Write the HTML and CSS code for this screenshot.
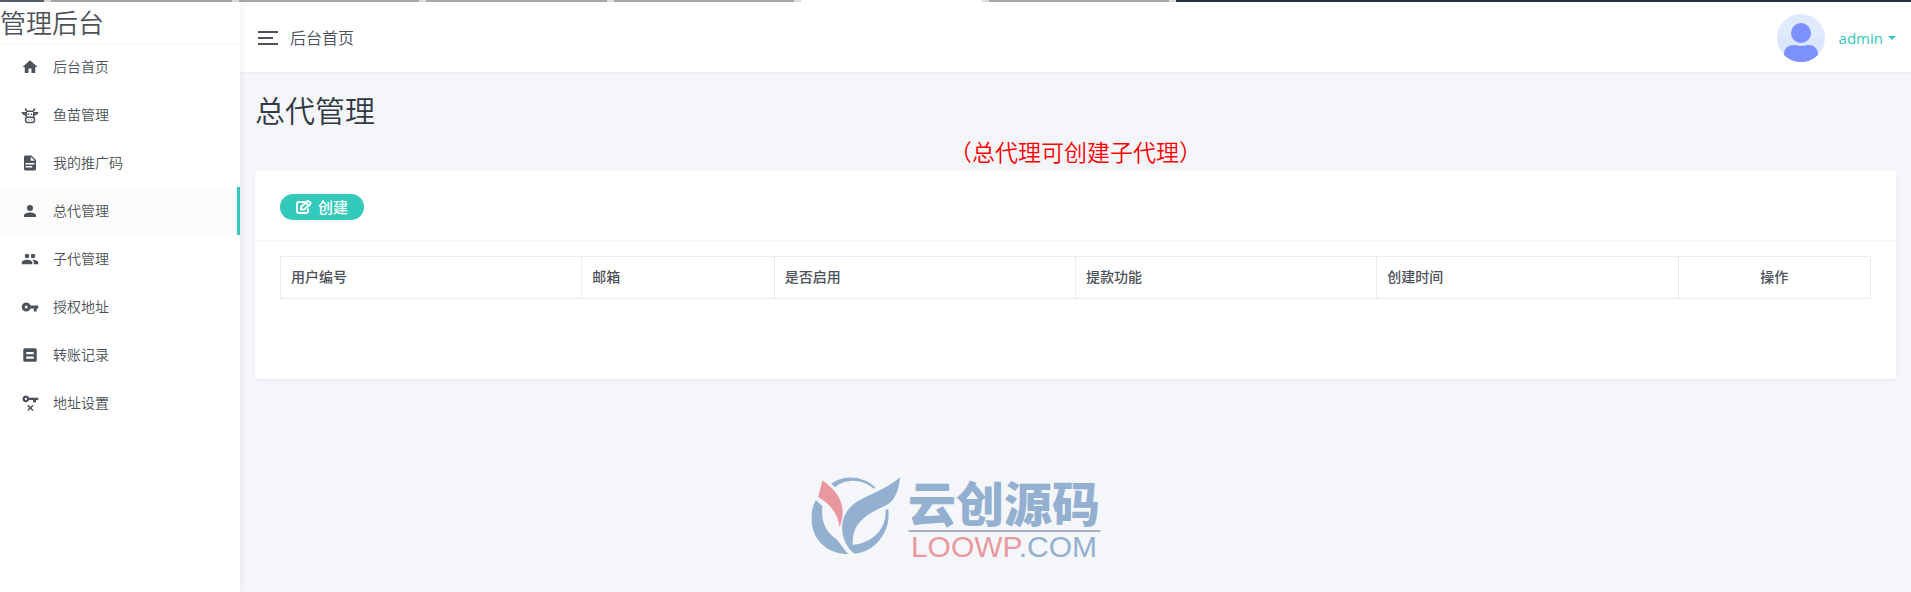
FILE: index.html
```html
<!DOCTYPE html>
<html lang="zh-CN">
<head>
  <meta charset="UTF-8" />
  <meta name="viewport" content="width=device-width, initial-scale=1.0"/>
  <title>总代管理</title>
  <link rel="stylesheet" href="styles.css">
</head>
<body>

<div class="top-strip">
  <span class="strip-start"></span>
  <span class="strip-tab"></span>
  <span class="strip-tab"></span>
  <span class="strip-tab"></span>
  <span class="strip-tab"></span>
  <span class="strip-tab current"></span>
  <span class="strip-tab"></span>
  <span class="strip-end"></span>
</div>

<div class="layout">
  <aside class="sidebar">
    <div class="brand">管理后台</div>
    <nav class="menu">
      <a href="#" class="menu-item">
        <svg class="icon" viewBox="0 0 24 24"><path d="M10,20V14H14V20H19V12H22L12,3L2,12H5V20H10Z"/></svg>
        后台首页
      </a>
      <a href="#" class="menu-item">
        <svg class="icon line" viewBox="0 0 24 24"><path d="M6 3C6 6 7 7 9 7H15C17 7 18 6 18 3M7 9H2C3 11 5 12 7 11M17 9H22C21 11 19 12 17 11M7 8V15M17 8V15"/><rect x="6" y="15" width="12" height="7" rx="3"/><path d="M10 10V12M14 10V12M10 18V19M14 18V19"/></svg>
        鱼苗管理
      </a>
      <a href="#" class="menu-item">
        <svg class="icon" viewBox="0 0 24 24"><path d="M13,9H18.500L13,3.500V9M6,2H14L20,8V20A2,2 0 0,1 18,22H6C4.890,22 4,21.100 4,20V4C4,2.890 4.890,2 6,2M15,18V16H6V18H15M18,14V12H6V14H18Z"/></svg>
        我的推广码
      </a>
      <a href="#" class="menu-item active">
        <svg class="icon" viewBox="0 0 24 24"><path d="M12,4A4,4 0 0,1 16,8A4,4 0 0,1 12,12A4,4 0 0,1 8,8A4,4 0 0,1 12,4M12,14C16.420,14 20,15.790 20,18V20H4V18C4,15.790 7.580,14 12,14Z"/></svg>
        总代管理
      </a>
      <a href="#" class="menu-item">
        <svg class="icon" viewBox="0 0 24 24"><path d="M16,13C15.710,13 15.380,13 15.030,13.050C16.190,13.890 17,15 17,16.500V19H23V16.500C23,14.170 18.330,13 16,13M8,13C5.670,13 1,14.170 1,16.500V19H15V16.500C15,14.170 10.330,13 8,13M8,11A3,3 0 0,0 11,8A3,3 0 0,0 8,5A3,3 0 0,0 5,8A3,3 0 0,0 8,11M16,11A3,3 0 0,0 19,8A3,3 0 0,0 16,5A3,3 0 0,0 13,8A3,3 0 0,0 16,11Z"/></svg>
        子代管理
      </a>
      <a href="#" class="menu-item">
        <svg class="icon" viewBox="0 0 24 24"><path d="M7,14A2,2 0 0,1 5,12A2,2 0 0,1 7,10A2,2 0 0,1 9,12A2,2 0 0,1 7,14M12.650,10C11.830,7.670 9.610,6 7,6A6,6 0 0,0 1,12A6,6 0 0,0 7,18C9.610,18 11.830,16.330 12.650,14H17V18H21V14H23V10H12.650Z"/></svg>
        授权地址
      </a>
      <a href="#" class="menu-item">
        <svg class="icon" viewBox="0 0 24 24"><path fill-rule="evenodd" d="M5,3H19A2,2 0 0,1 21,5V19A2,2 0 0,1 19,21H5A2,2 0 0,1 3,19V5A2,2 0 0,1 5,3M7,8V11H17V8H7M7,14V17H17V14H7Z"/></svg>
        转账记录
      </a>
      <a href="#" class="menu-item">
        <svg class="icon" viewBox="0 0 24 24"><path d="M6.500,2C8.460,2 10.130,3.250 10.740,5H23V8H20V11H16V8H10.740C10.130,9.750 8.460,11 6.500,11C4,11 2,9 2,6.500C2,4 4,2 6.500,2M6.500,5A1.500,1.500 0 0,0 5,6.500A1.500,1.500 0 0,0 6.500,8A1.500,1.500 0 0,0 8,6.500A1.500,1.500 0 0,0 6.500,5Z"/><path class="cross" d="M9 15L16 22M16 15L9 22"/></svg>
        地址设置
      </a>
    </nav>
  </aside>

  <div class="page">
    <header class="header">
      <button class="toggle" aria-label="菜单"><span></span><span class="short"></span><span></span></button>
      <span class="header-title">后台首页</span>
      <button class="user">
        <svg class="avatar" viewBox="0 0 48 48">
          <circle cx="24" cy="24" r="24" fill="#e0eaff"/>
          <path d="M0 24C15 22 33 30 47 20A24 24 0 0 1 1 30Z" fill="#dbe6fc"/>
          <circle cx="24" cy="19" r="10" fill="#7c90ff"/>
          <path d="M7 41C7 34 11 31 17 31C20 31 21 32 24 32C27 32 28 31 31 31C37 31 41 34 41 41A24 24 0 0 1 7 41Z" fill="#7c90ff"/>
        </svg>
        admin
        <span class="caret"></span>
      </button>
    </header>

    <main class="content">
      <h1>总代管理</h1>
      <p class="notice">（总代理可创建子代理）</p>
      <section class="card">
        <div class="card-header">
          <button class="btn-create">
            <svg class="edit" viewBox="0 0 16 14"><path d="M9 2H3Q1 2 1 4V11Q1 13 3 13H10Q12 13 12 11V8.500M5 9.500V7L11 1.500Q12 0.600 13 1.500L14.300 2.800Q15 3.500 14 4.500L8 9.500ZM10 3L13 6"/></svg>
            创建
          </button>
        </div>
        <div class="card-body">
          <table>
            <thead>
              <tr>
                <th class="wide">用户编号</th>
                <th>邮箱</th>
                <th class="wide">是否启用</th>
                <th class="wide">提款功能</th>
                <th class="wide">创建时间</th>
                <th class="center">操作</th>
              </tr>
            </thead>
          </table>
        </div>
      </section>
    </main>
  </div>
</div>

<div class="watermark">
  <svg class="mark" viewBox="0 0 267 232">
    <g fill="#94b0d0">
      <path d="M59 19C98 -9 155 -4 191 30L187 34C151 5 105 2 70 30Z"/>
      <path d="M13 68L33 87C27 129 42 165 77 187Q92 208 110 230C60 231 19 202 5 158Q-9 108 13 68Z"/>
      <path d="M266 0C262 35 253 65 231 80C181 105 119 127 124 203C171 198 226 165 222 98L230 95C240 151 200 224 129 229C87 198 80 132 112 95C141 58 209 48 266 0Z"/>
    </g>
    <path d="M33 9C73 39 112 79 84 150C81 114 57 79 20 59Z" fill="#e998a0"/>
  </svg>
  <div class="wordmark">
    <div class="wordmark-name">云创源码</div>
    <div class="wordmark-site"><span>LOOWP</span>.COM</div>
  </div>
</div>

</body>
</html>
```
FILE: styles.css
```css
* { box-sizing: border-box; }

body {
  font-family: "Open Sans", "Noto Sans CJK SC", sans-serif;
  font-size: 14px;
  font-weight: 350;
  line-height: 24px;
  margin: 0;
  min-height: 100vh;
  color: #4d5259;
  background-color: #f5f6fa;
  display: flex;
  flex-direction: column;
  position: relative;
}

button {
  font: inherit;
  padding: 0;
  border: none;
  background: none;
  cursor: pointer;
}

.top-strip {
  display: flex;
  gap: 7px;
  height: 2px;
  background: #dcdee0;
}

.strip-start {
  flex: 44;
  background: #59616b;
}

.strip-tab {
  flex: 180;
  background: #a5a8ac;
}

.strip-tab.current {
  background: #fff;
}

.strip-end {
  flex: 733;
  background: #26313f;
}

.layout {
  display: flex;
  flex: 1;
}

.sidebar {
  width: 240px;
  flex-shrink: 0;
  background: #fff;
  box-shadow: 0 0 8px rgba(0, 0, 0, 0.08);
  z-index: 1;
}

.brand {
  height: 42px;
  font-size: 26px;
  line-height: 43px;
  border-bottom: 1px solid #f7f7f7;
}

.menu {
  margin-top: -1px;
}

.menu-item {
  display: flex;
  align-items: center;
  gap: 14px;
  height: 48px;
  padding-left: 21px;
  color: #4d5259;
  text-decoration: none;
}

.menu-item.active {
  background: #fcfcfc;
  border-right: 3px solid #33cabb;
}

.icon {
  width: 18px;
  height: 18px;
  fill: #4d5259;
}

.icon.line {
  fill: none;
  stroke: #4d5259;
  stroke-width: 2;
}

.cross {
  stroke: #4d5259;
  stroke-width: 2;
}

.page {
  flex: 1;
}

.header {
  display: flex;
  align-items: center;
  height: 70px;
  padding: 2px 15px 0 18px;
  background: #fff;
  box-shadow: 0 1px 2px rgba(0, 0, 0, 0.04);
}

.toggle {
  display: flex;
  flex-direction: column;
  gap: 4px;
  width: 20px;
}

.toggle span {
  height: 2px;
  background: #4d5259;
}

.toggle .short {
  width: 15px;
}

.header-title {
  margin-left: 12px;
  font-size: 16px;
}

.user {
  display: flex;
  align-items: center;
  margin-left: auto;
  font-size: 15px;
  font-weight: 400;
  color: #33cabb;
}

.avatar {
  width: 48px;
  height: 48px;
  margin-right: 14px;
}

.caret {
  margin-left: 5px;
  border: 4px solid transparent;
  border-top-color: #33cabb;
  border-bottom: none;
}

.content {
  padding: 15px;
}

h1 {
  margin: 0;
  font-size: 30px;
  font-weight: 350;
  line-height: 47px;
  color: #313944;
}

.notice {
  margin: 0;
  font-size: 23px;
  line-height: 37px;
  text-align: center;
  color: #f00;
}

.card {
  background: #fff;
  border-radius: 3px;
  box-shadow: 0 2px 4px rgba(0, 0, 0, 0.04);
}

.card-header {
  padding: 23px 25px 20px;
  border-bottom: 1px solid #f7f7f7;
}

.btn-create {
  display: flex;
  align-items: center;
  gap: 6px;
  height: 26px;
  padding: 0 16px;
  border-radius: 13px;
  background: #33cabb;
  color: #fff;
  font-size: 15px;
  font-weight: 500;
}

.edit {
  width: 16px;
  height: 14px;
  fill: none;
  stroke: #fff;
  stroke-width: 2;
}

.card-body {
  padding: 15px 25px 80px;
}

table {
  width: 100%;
  table-layout: fixed;
  border-collapse: collapse;
}

th {
  padding: 8px 10px 9px;
  border: 1px solid #ebebeb;
  font-weight: 500;
  text-align: left;
}

th.wide {
  width: 18.95%;
}

th.center {
  text-align: center;
}

.watermark {
  position: absolute;
  left: 50%;
  bottom: 30px;
  transform: translateX(-50%);
  display: flex;
  gap: 8px;
  color: #94b0d0;
}

.mark {
  width: 89px;
  height: 78px;
}

.wordmark-name {
  font-family: "Noto Sans CJK SC", sans-serif;
  font-size: 48px;
  font-weight: 900;
  line-height: 48px;
  padding-bottom: 5px;
  border-bottom: 2px solid #a5b0c8;
}

.wordmark-site {
  font-family: "Liberation Sans", sans-serif;
  font-size: 30px;
  font-weight: 400;
  line-height: 30px;
  text-align: center;
}

.wordmark-site span {
  color: #e998a0;
}
```
